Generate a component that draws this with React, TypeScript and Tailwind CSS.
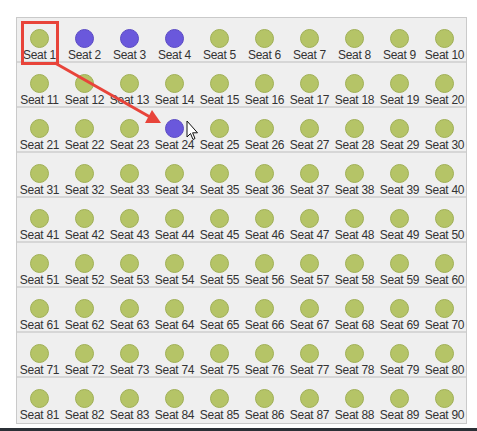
import React from 'react';

const taken = new Set([2, 3, 4, 24]);

const rows = Array.from({ length: 9 }, (_, r) =>
  Array.from({ length: 10 }, (_, c) => r * 10 + c + 1)
);

function Seat({ n }: { n: number }) {
  const isTaken = taken.has(n);
  return (
    <div className="flex flex-col items-center">
      <div
        className={`h-[19px] w-[19px] rounded-full border ${
          isTaken ? 'bg-[#6a58dc] border-[#5a4ac4]' : 'bg-[#b5c467] border-[#a0b055]'
        }`}
      />
      <span className="mt-[1px] whitespace-nowrap text-[12px] leading-[12px] tracking-[-0.3px] text-[#333]">
        Seat {n}
      </span>
    </div>
  );
}

export default function App() {
  return (
    <div className="relative flex h-[431px] w-[477px] flex-col bg-white" style={{ fontFamily: '"Liberation Sans", Arial, sans-serif' }}>
      <div className="ml-[16px] mt-[17px] w-[451px] border border-[#cacaca] bg-[#efefef]">
        {rows.map((row, i) => (
          <div
            key={i}
            className={`grid h-[45px] grid-cols-[repeat(10,45px)] pt-[11px] ${
              i < rows.length - 1 ? 'border-b-2 border-[#d6d6d6]' : ''
            }`}
          >
            {row.map((n) => (
              <Seat key={n} n={n} />
            ))}
          </div>
        ))}
      </div>

      <div className="mt-auto h-[3px] bg-[#2b3036]" />

      {/* annotation overlay: highlight box, arrow and cursor */}
      <svg className="pointer-events-none absolute left-0 top-0" width="477" height="431">
        <rect x="22.5" y="22.5" width="35" height="41" fill="none" stroke="#e8443a" strokeWidth="3" />
        <line x1="55" y1="63" x2="150" y2="117" stroke="#e8443a" strokeWidth="3" />
        <polygon points="161,123 145,123 152,110" fill="#e8443a" />
        <path
          d="M187 121 L187 137 L190.5 133.5 L193 139.5 L195 138.5 L192.6 132.8 L197.5 132.8 Z"
          fill="#fff"
          stroke="#111"
          strokeWidth="1"
          strokeLinejoin="round"
        />
      </svg>
    </div>
  );
}
